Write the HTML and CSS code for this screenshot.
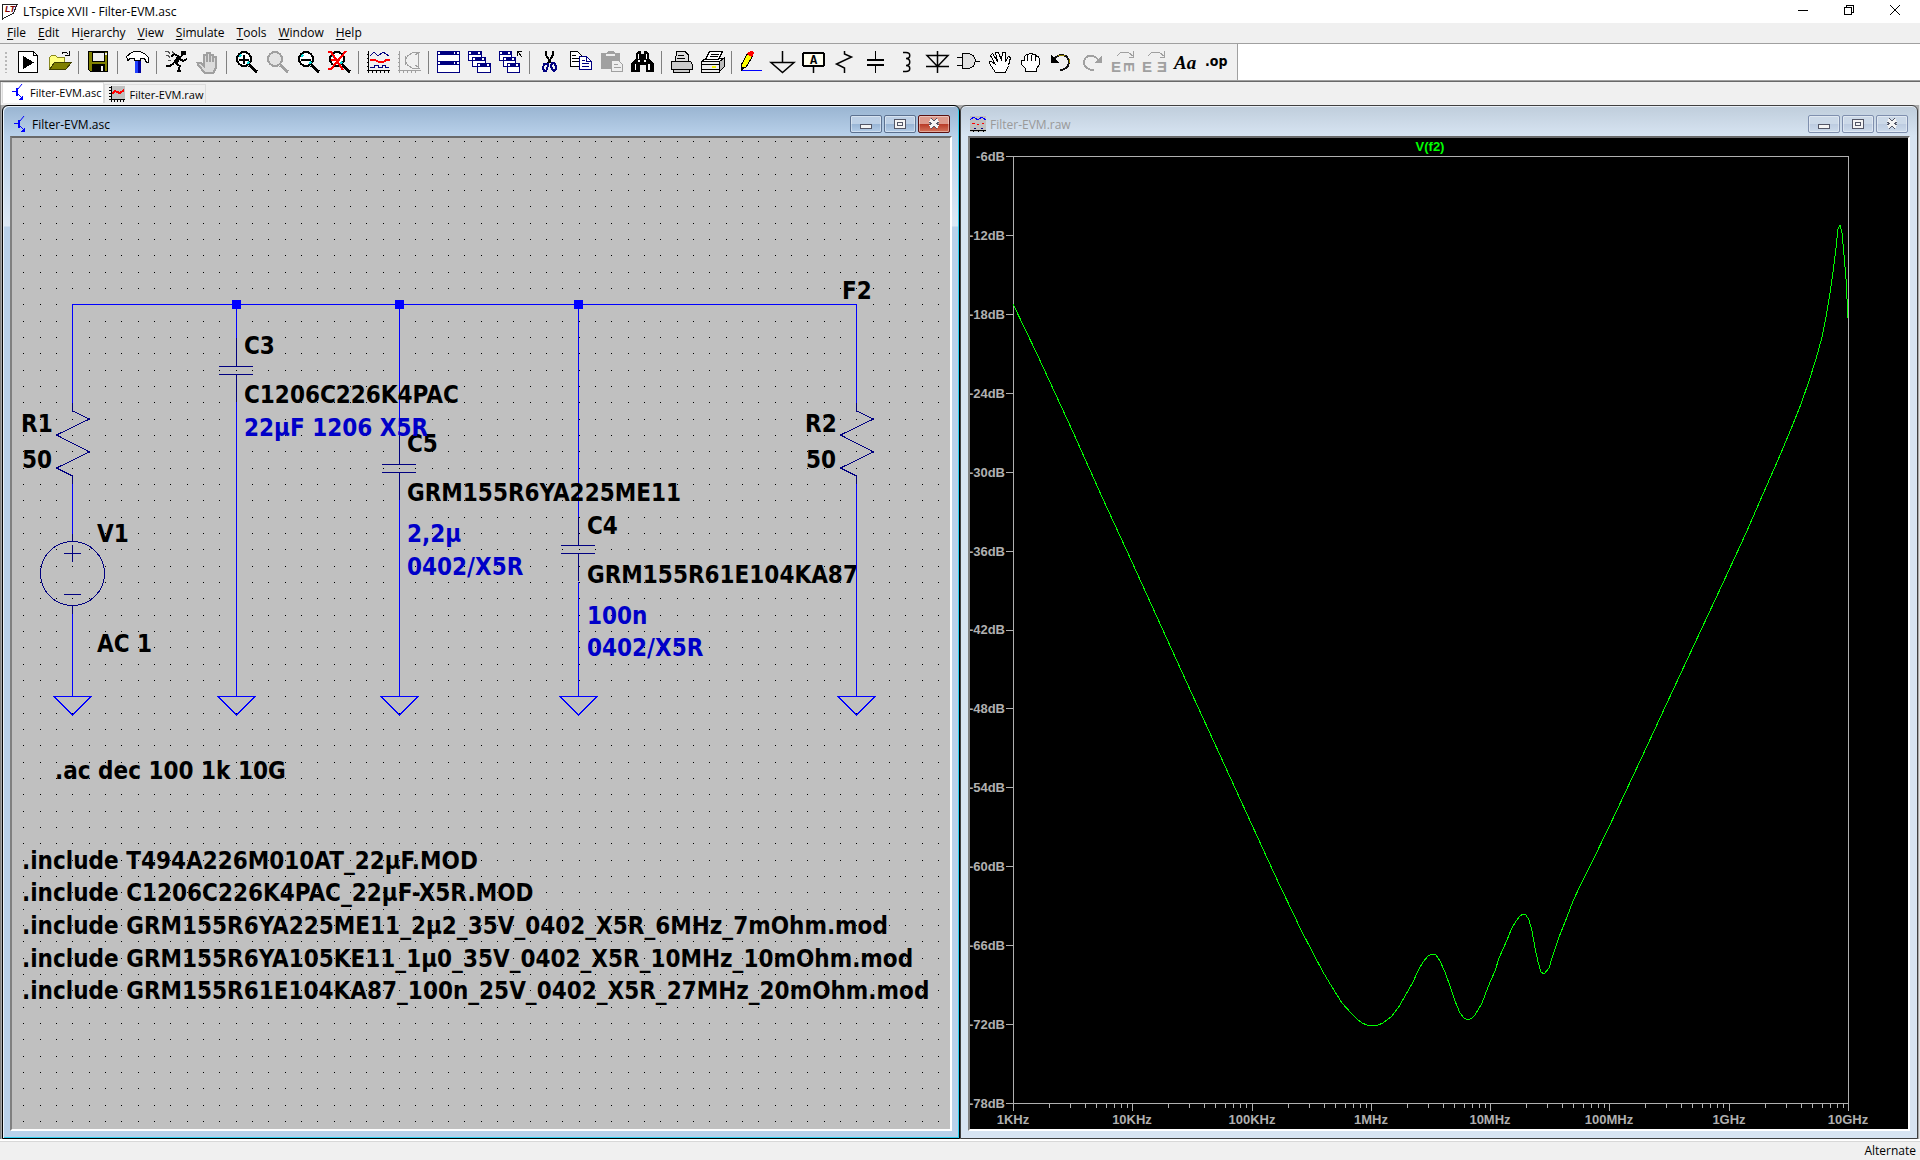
FILE: index.html
```html
<!DOCTYPE html>
<html lang="en">
  <head>
    <meta charset="UTF-8" />
    <title>LTspice XVII - Filter-EVM.asc</title>
    <link rel="stylesheet" href="styles.css">
  </head>
  <body>
    <header class="titlebar">
      <svg class="app-icon" width="17" height="17" viewBox="0 0 17 17">
        <path d="M.5 1v15l11-6 4-9z" fill="#fff" stroke="#222" />
        <text x="3" y="9" class="logo-text">LT</text>
      </svg>
      <h1>LTspice XVII - Filter-EVM.asc</h1>
      <div class="system-buttons">
        <button aria-label="Minimize"><svg width="12" height="12"><path d="M1 6.5h10" /></svg></button>
        <button aria-label="Restore"><svg width="12" height="12"><path d="M1.5 3.5h7v7h-7zM3.5 3.5v-2h7v7h-2" /></svg></button>
        <button aria-label="Close"><svg width="12" height="12"><path class="smooth" d="M1 1l10 10M11 1L1 11" /></svg></button>
      </div>
    </header>

    <nav class="menubar">
      <button><u>F</u>ile</button>
      <button><u>E</u>dit</button>
      <button>H<u>i</u>erarchy</button>
      <button><u>V</u>iew</button>
      <button><u>S</u>imulate</button>
      <button><u>T</u>ools</button>
      <button><u>W</u>indow</button>
      <button><u>H</u>elp</button>
    </nav>

    <div class="toolbar-row">
      <div class="toolbar">
        <span class="grip"></span>
        <button class="tool" aria-label="New schematic">
          <svg viewBox="0 0 23 23"><path d="M1.5 .5h15l4 4v17h-19z" fill="#fff" stroke="#000" /><path d="M16.5 .5v4h4" fill="none" stroke="#000" /><path d="M6 5v13l11-6.5z" /></svg>
        </button>
        <button class="tool" aria-label="Open">
          <svg viewBox="0 0 23 23"><path d="M1.5 18.5v-12l2-2h4l2 2h7v5" fill="#ffff80" stroke="#888820" /><path d="M1.5 18.5l5-7h17l-6 7z" fill="#808000" stroke="#404000" /><path d="M13.5 3.5c1-3 5-3 7 0M21.5 0v4h-5" fill="none" stroke="#000" /></svg>
        </button>
        <span class="separator"></span>
        <button class="tool" aria-label="Save">
          <svg viewBox="0 0 23 23"><path d="M1.5 .5h19v20h-17l-2-2z" fill="#808000" stroke="#000" /><path d="M5 1h12v9H5z" fill="#efefef" stroke="#000" /><path d="M5 13h13v8H5z" /><path d="M14 15h2v5h-2z" fill="#efefef" /><path d="M18 2h2v2h-2z" fill="#efefef" /></svg>
        </button>
        <span class="separator"></span>
        <button class="tool" aria-label="Control panel">
          <svg viewBox="0 0 23 23"><path d="M.5 5.5l5-4 3-1h6l5 3 3 3v5h-2l-2-4h-4v2H8v-2H4l-2 2z" fill="#fff" stroke="#000" /><path d="M9 10h6v12H9z" fill="#0000a0" /><path d="M9 10h3v12H9z" fill="#2040ff" /></svg>
        </button>
        <span class="separator"></span>
        <button class="tool" aria-label="Run">
          <svg viewBox="0 0 23 23"><path d="M16 0h5v4h-3l-2 2z" /><path d="M13 5l-4-2-3 3M15 8l3 2 4-2M10 12l5 3-2 5h3M9 12l-4 3H1" fill="none" stroke="#000" stroke-width="2" /><path d="M15 5l-5 7" stroke="#000" stroke-width="4" /><path d="M0 .5h3l2 2M1 4.5h2l2 2M7 .5l2 2M3 10l3-1" fill="none" stroke="#555" /></svg>
        </button>
        <button class="tool" aria-label="Halt" disabled>
          <svg viewBox="0 0 23 23"><path d="M8.5 21.5l-6-7-1-3h3l3 3v-11h3v-2h3v2h3v2h3v12l-2 4zM10.5 3v8M13.5 3v8M16.5 4v7" fill="#dcdcdc" stroke="#a0a0a0" stroke-width="2" /></svg>
        </button>
        <span class="separator"></span>
        <button class="tool" aria-label="Zoom in">
          <svg viewBox="0 0 23 23"><circle cx="9" cy="8" r="7" fill="#fff" stroke="#000" stroke-width="2" /><path d="M4 6l2-2M12 13l2-2" stroke="#00e0e0" stroke-width="2" /><path d="M9 4v9M4 8.5h10" stroke="#000" stroke-width="2" /><path d="M14 14l8 7" stroke="#000" stroke-width="3" /></svg>
        </button>
        <button class="tool" aria-label="Pan" disabled>
          <svg viewBox="0 0 23 23"><circle cx="9" cy="8" r="7" fill="#e4e4e4" stroke="#a0a0a0" stroke-width="2" /><path d="M14 14l8 7" stroke="#a0a0a0" stroke-width="3" /></svg>
        </button>
        <button class="tool" aria-label="Zoom out">
          <svg viewBox="0 0 23 23"><circle cx="9" cy="8" r="7" fill="#fff" stroke="#000" stroke-width="2" /><path d="M4 6l2-2M12 13l2-2" stroke="#00e0e0" stroke-width="2" /><path d="M4 8.5h10" stroke="#000" stroke-width="2" /><path d="M14 14l8 7" stroke="#000" stroke-width="3" /></svg>
        </button>
        <button class="tool" aria-label="Zoom full extents">
          <svg viewBox="0 0 23 23"><circle cx="9" cy="8" r="7" fill="#fff" stroke="#000" stroke-width="2" /><path d="M4 6l2-2M12 13l2-2" stroke="#00e0e0" stroke-width="2" /><path d="M14 14l8 7" stroke="#000" stroke-width="3" /><path d="M0 1h3l12 18M18 0L3 18H0M3 9h9" fill="none" stroke="#f00" stroke-width="2" /></svg>
        </button>
        <span class="separator"></span>
        <button class="tool" aria-label="Autorange">
          <svg viewBox="0 0 23 23"><path d="M1.5 0v22M0 19.5h23M0 3.5h2M0 7.5h2M0 11.5h2M0 15.5h2M5.5 19v3M9.5 19v3M13.5 19v3M17.5 19v3M21.5 19v3" stroke="#000" /><path d="M3 5l4-4 4 4 5-4 6 4M3 16.5h4v-2h4v2h4v-2h3v2h4" fill="none" stroke="#000080" /><path d="M3 9.5l4-1 4 2h6l3-2h3" fill="none" stroke="#f00" stroke-width="2" /></svg>
        </button>
        <button class="tool" aria-label="Bode plot" disabled>
          <svg viewBox="0 0 23 23"><path d="M1.5 0v22M0 19.5h23M0 3.5h2M0 7.5h2M0 11.5h2M0 15.5h2M5.5 19v3M9.5 19v3M13.5 19v3M17.5 19v3M20.5 1v16M7.5 5v9M7 9.5l3-5 5-3h7M7 9.5l3 5 5 3h7M17 4l3-2M17 14l3 2" fill="none" stroke="#a0a0a0" /></svg>
        </button>
        <span class="separator"></span>
        <button class="tool" aria-label="Tile windows">
          <svg viewBox="0 0 23 23"><path d="M.5 .5h22v10H.5zM.5 10.5h22v11H.5z" fill="#fff" stroke="#000080" /><path d="M0 0h23v4H0zM0 10h23v4H0z" fill="#000080" /><path d="M1 1h2v2H1zM17 1h1v2h-1zM20 1h2v2h-2zM1 11h2v2H1zM17 11h1v2h-1zM20 11h2v2h-2z" fill="#fff" /></svg>
        </button>
        <button class="tool" aria-label="Cascade windows">
          <svg viewBox="0 0 23 23"><g fill="#fff" stroke="#000080"><path d="M.5 .5h13v9H.5zM4.500 6.5h13v9h-13zM9.500 12.5h13v9h-13z" /></g><path d="M0 0h14v4H0zM4 6h14v4H4zM9 12h14v4H9z" fill="#000080" /><path d="M1 1h2v2H1zM10 1h2v2h-2zM5 7h2v2H5zM14 7h2v2h-2zM10 13h2v2h-2zM19 13h2v2h-2z" fill="#fff" /></svg>
        </button>
        <button class="tool" aria-label="Close all windows">
          <svg viewBox="0 0 23 23"><g fill="#fff" stroke="#000080"><path d="M.5 .5h12v9H.5zM4.5 6.5h12v9h-12zM8.5 12.5h12v9h-12z" /></g><path d="M0 0h13v4H0zM4 6h13v4H4zM8 12h13v4H8z" fill="#000080" /><path d="M1 1h2v2H1zM9 1h2v2H9zM5 7h2v2H5zM13 7h2v2h-2zM9 13h2v2H9zM17 13h2v2h-2z" fill="#fff" /><path d="M18.5 5V.5H23M19 1l4 5" fill="none" stroke="#000" /></svg>
        </button>
        <span class="separator"></span>
        <button class="tool" aria-label="Cut">
          <svg viewBox="0 0 23 23"><path d="M8 0v4l5 8M15 0v4l-5 8" fill="none" stroke="#000" stroke-width="2" /><path d="M6 13h4v2l-2 5H6l-1-3zM14 12h2l2 3v3l-2 2-2-2-1-3z" fill="none" stroke="#000080" stroke-width="2" /></svg>
        </button>
        <button class="tool" aria-label="Copy">
          <svg viewBox="0 0 23 23"><path d="M1.5 .5h7l4 4v11h-11z" fill="#fff" stroke="#000" /><path d="M3 4.5h4M3 7.5h7M3 10.5h7" stroke="#000" /><path d="M10.5 5.5h7l5 5v8h-12z" fill="#fff" stroke="#000080" /><path d="M17.5 5.5v5h5M13 9.5h3M13 12.5h7M13 15.5h7" fill="none" stroke="#000080" /></svg>
        </button>
        <button class="tool" aria-label="Paste" disabled>
          <svg viewBox="0 0 23 23"><path d="M1 2h5l2-2h5l2 2h5v16H1z" fill="#a0a0a0" /><path d="M6 3h9v2H6z" fill="#eee" /><path d="M11.5 9.5h7l4 4v7h-11z" fill="#eee" stroke="#a0a0a0" /><path d="M14 13.5h4M14 16.5h7" stroke="#a0a0a0" /></svg>
        </button>
        <button class="tool" aria-label="Find">
          <svg viewBox="0 0 23 23"><path d="M5 3l2-3h3v3h3V0h3l2 3v4l5 6v8h-8v-7H9v7H0v-8l5-6z" /><path d="M7 3h1v5H7zM15 3h1v5h-1zM4 13h1v6H4zM17 13h2v6h-2zM7 9h2v2H7zM13 9h2v2h-2z" fill="#fff" /></svg>
        </button>
        <span class="separator"></span>
        <button class="tool" aria-label="Print setup">
          <svg viewBox="0 0 23 23"><path d="M7 .5h8l3 3v7H5z" fill="#ddd" stroke="#000" /><path d="M1.5 10.5h19l2 3v5h-3v3h-16v-3h-2z" fill="#ccc" stroke="#000" /><path d="M4 18.5h15M8 4.5h6M7 7.5h8" stroke="#000" /></svg>
        </button>
        <button class="tool" aria-label="Print">
          <svg viewBox="0 0 23 23"><path d="M18 11l5-4v9l-5 5z" fill="#bbb" stroke="#000" /><path d="M.5 10.5l4-3h18l-4 3z" fill="#fff" stroke="#000" /><path d="M8.5 .5h13l-4 8h-13z" fill="#fff" stroke="#000" /><path d="M10 3.5h8M9 5.5h8" stroke="#000" /><path d="M.5 10.5h18v11H.5zM0 13.5h18M0 18.5h18" fill="#eee" stroke="#000" /><path d="M11 15h4v2h-4z" fill="#f5f500" /></svg>
        </button>
        <span class="separator"></span>
        <button class="tool" aria-label="Draw wire">
          <svg viewBox="0 0 23 23"><path d="M1.5 18.5v-5l6-11 5 3-6 10z" fill="#ff0" stroke="#000" /><path d="M8 1l4-1 2 2-2 4-5-3z" fill="#f00" /><path d="M1 15l4 2-4 3z" /><path d="M2 19.5h20" stroke="#00f" /></svg>
        </button>
        <button class="tool" aria-label="Ground">
          <svg viewBox="0 0 23 23"><path class="thick-line" d="M11.5 0v11M0 11.5h23l-11.500 10z" /></svg>
        </button>
        <button class="tool" aria-label="Label net">
          <svg viewBox="0 0 23 23"><rect x="1" y="2" width="21" height="13" rx="2" fill="#fffff0" stroke="#000" stroke-width="2" /><path class="thick-line" d="M11.5 16v6" /><text x="8" y="13" class="label-glyph">A</text></svg>
        </button>
        <button class="tool" aria-label="Resistor">
          <svg viewBox="0 0 23 23"><path class="thick-line" d="M11.5 0v3l7 3-15 7 8 4v5" /></svg>
        </button>
        <button class="tool" aria-label="Capacitor">
          <svg viewBox="0 0 23 23"><path d="M11.5 0v8M11.5 15v7" stroke="#000" /><path d="M3 9h17M3 14h17" stroke="#000" stroke-width="2" /></svg>
        </button>
        <button class="tool" aria-label="Inductor">
          <svg viewBox="0 0 23 23"><path class="thick-line" d="M8 1.5h3c5 0 5 6 0 6 5 0 5 7 0 7 5 0 5 6 0 6H8" /></svg>
        </button>
        <button class="tool" aria-label="Diode">
          <svg viewBox="0 0 23 23"><path class="thick-line" d="M11.5 0v22M1 4.5h21l-10.500 11zM0 15.500h23" /></svg>
        </button>
        <button class="tool" aria-label="Component">
          <svg viewBox="0 0 23 23"><path d="M5.5 2.5h6c9 2 9 13 0 15h-6z" fill="#e0e0e0" stroke="#000" /><path d="M0 6.5h5M0 14.5h5M18 10.5h5" stroke="#000" /></svg>
        </button>
        <button class="tool" aria-label="Move">
          <svg viewBox="0 0 23 23"><path d="M7.5 21.5l-6-9v-2h2l4 3-5-9 2-2 5 8-2-9h3l3 8 1-8h3v9l3-5 2 1-2 8-3 7z" fill="#fff" stroke="#000" /></svg>
        </button>
        <button class="tool" aria-label="Drag">
          <svg viewBox="0 0 23 23"><path d="M6.5 20.5v-3l-4-4v-4h3v-4l2-2h2l1-1h2l2 1h2l1 2h2l1 3v5l-3 4v3zM8.5 4v6M12.5 4v6M16.5 5v5" fill="#fff" stroke="#000" /></svg>
        </button>
        <button class="tool" aria-label="Undo">
          <svg viewBox="0 0 23 23"><path d="M3 10c4-8 15-8 16 1 0 5-4 8-9 8" fill="none" stroke="#111" stroke-width="2" /><path d="M8 4.500h7M19.500 8v4" stroke="#908000" /><path d="M1 4v8h8z" /></svg>
        </button>
        <button class="tool" aria-label="Redo" disabled>
          <svg viewBox="0 0 23 23"><path d="M18 10c-4-7-14-7-15 1 0 5 4 8 10 8" fill="none" stroke="#a0a0a0" stroke-width="2" /><path d="M21 4v8h-8z" fill="#a0a0a0" /></svg>
        </button>
        <button class="tool" aria-label="Rotate" disabled>
          <svg viewBox="0 0 23 23"><path d="M4.5 5.5l4-4h8l5 4M21.5 0v6h-5" fill="none" stroke="#a0a0a0" /><text x="-1" y="21" class="turn-glyph">E</text><text transform="translate(12 11) rotate(90)" class="turn-glyph">E</text></svg>
        </button>
        <button class="tool" aria-label="Mirror" disabled>
          <svg viewBox="0 0 23 23"><path d="M4.5 5.5l4-4h8l5 4M21.5 0v6h-5" fill="none" stroke="#a0a0a0" /><text x="-1" y="21" class="turn-glyph">E</text><text x="14" y="21" class="turn-glyph">Ǝ</text></svg>
        </button>
        <button class="tool" aria-label="Text">
          <svg viewBox="0 0 23 23"><text x="0" y="18" class="aa-glyph">Aa</text></svg>
        </button>
        <button class="tool" aria-label="SPICE directive">
          <svg viewBox="0 0 23 23"><text x="0" y="15" class="op-glyph">.op</text></svg>
        </button>
      </div>
    </div>

    <div class="tabs" role="tablist">
      <button class="tab tab-active" role="tab" aria-selected="true">
        <svg width="16" height="16"><use href="#transistor" /></svg>
        Filter-EVM.asc
      </button>
      <button class="tab" role="tab" aria-selected="false">
        <svg width="16" height="16"><path d="M2 0h14v14H2z" fill="#c0c0c0" /><path d="M2.5 0v16M0 13.5h16M0 1.5h2M0 4.5h2M0 7.5h2M0 10.5h2M5.5 14v2M8.5 14v2M11.5 14v2M14.5 14v2" stroke="#000" /><path d="M3 8l3-3 2 1 3 1 4-3" fill="none" stroke="#f00" stroke-width="2" /></svg>
        Filter-EVM.raw
      </button>
    </div>

    <main class="workspace">
      <section class="window window-active">
        <div class="window-title">
          <svg width="16" height="16">
            <g id="transistor" stroke="#00f"><path d="M2 7.5h4" /><path d="M7 4v8" stroke-width="2" /><path class="smooth" d="M8 5l4-5M8 10l4 4" /><path d="M13 15.500H9l4-4z" fill="#00f" stroke="none" /></g>
          </svg>
          <h2>Filter-EVM.asc</h2>
          <button aria-label="Minimize"><svg width="12" height="12"><rect x=".5" y="6.5" width="11" height="4" /></svg></button>
          <button aria-label="Maximize"><svg width="12" height="12"><path d="M.5 1.5h11v9H.5zM3.5 4.5h5v3h-5z" /></svg></button>
          <button class="close" aria-label="Close"><svg width="12" height="12"><path class="cross-edge" d="M2 2l8 7M10 2L2 9" /><path class="cross" d="M2 2l8 7M10 2L2 9" /></svg></button>
        </div>
        <div class="view schematic">
          <svg viewBox="12 138 938 991" role="img" aria-label="Filter schematic">
            <defs>
              <pattern id="grid" x="23" y="157" width="49" height="49" patternUnits="userSpaceOnUse">
                <path d="M0 0h1v1H0zM17 0h1v1h-1zM33 0h1v1h-1zM0 17h1v1H0zM17 17h1v1h-1zM33 17h1v1h-1zM0 33h1v1H0zM17 33h1v1h-1zM33 33h1v1h-1z" />
              </pattern>
              <path id="ground" d="M-18 .5h37L.5 19z" />
              <path id="resistor" d="M.5 0v8l17 8-33 16 33 17-33 16 16 8v8" />
              <g id="capacitor"><path d="M.5-28V0M.5 8v28" /><path d="M-17 .5h34M-17 8.5h34" /></g>
            </defs>
            <rect x="12" y="138" width="938" height="991" fill="url(#grid)" />

            <g class="wire">
              <path d="M72.5 403V304.5h784V403M72.5 484v50M72.5 614v82M856.5 484v212" />
              <path d="M236.5 304v34M236.5 402v294M399.5 304v132M399.5 500v196M578.5 304v214M578.5 582v114" />
              <use href="#ground" x="72" y="696" />
              <use href="#ground" x="236" y="696" />
              <use href="#ground" x="399" y="696" />
              <use href="#ground" x="578" y="696" />
              <use href="#ground" x="856" y="696" />
            </g>
            <path class="junction" d="M232 300h9v9h-9zM395 300h9v9h-9zM574 300h9v9h-9z" />

            <g class="symbol">
              <use href="#resistor" x="72" y="403" />
              <use href="#resistor" x="856" y="403" />
              <use href="#capacitor" x="236" y="366" />
              <use href="#capacitor" x="399" y="464" />
              <use href="#capacitor" x="578" y="545" />
              <circle cx="72.5" cy="573.5" r="32" />
              <path d="M72.5 534v8M72.5 606v8M64 553.5h17M72.5 545v17M64 594.5h17" />
            </g>

            <g class="label">
              <text x="842" y="299">F2</text>
              <text x="21" y="432">R1</text>
              <text x="22" y="468">50</text>
              <text x="805" y="432">R2</text>
              <text x="806" y="468">50</text>
              <text x="97" y="542">V1</text>
              <text x="97" y="652">AC 1</text>
              <text x="244" y="354">C3</text>
              <text x="244" y="403">C1206C226K4PAC</text>
              <text x="407" y="452">C5</text>
              <text x="407" y="501">GRM155R6YA225ME11</text>
              <text x="587" y="534">C4</text>
              <text x="587" y="583">GRM155R61E104KA87</text>
              <text x="55" y="779">.ac dec 100 1k 10G</text>
              <text x="22" y="869">.include T494A226M010AT_22µF.MOD</text>
              <text x="22" y="901">.include C1206C226K4PAC_22µF-X5R.MOD</text>
              <text x="22" y="934">.include GRM155R6YA225ME11_2µ2_35V_0402_X5R_6MHz_7mOhm.mod</text>
              <text x="22" y="967">.include GRM155R6YA105KE11_1µ0_35V_0402_X5R_10MHz_10mOhm.mod</text>
              <text x="22" y="999">.include GRM155R61E104KA87_100n_25V_0402_X5R_27MHz_20mOhm.mod</text>
            </g>
            <g class="label note">
              <text x="244" y="436">22µF 1206 X5R</text>
              <text x="407" y="542">2,2µ</text>
              <text x="407" y="575">0402/X5R</text>
              <text x="587" y="624">100n</text>
              <text x="587" y="656">0402/X5R</text>
            </g>
          </svg>
        </div>
      </section>

      <section class="window">
        <div class="window-title">
          <svg width="16" height="16">
            <path d="M0 0h16v16H0z" fill="#c0c0c0" /><path d="M0 4l4-3 4 3 4-3 4 3" fill="none" stroke="#00f" /><path d="M2 7.5h3M7 8.5h2M12 7.5h2" stroke="#f00" /><path d="M4 12.5h2M11 12.5h2" stroke="#000080" /><path d="M0 14.5h16M3.5 14v2M8.5 14v2M13.5 14v2" stroke="#000" />
          </svg>
          <h2>Filter-EVM.raw</h2>
          <button aria-label="Minimize"><svg width="12" height="12"><rect x=".5" y="6.5" width="11" height="4" /></svg></button>
          <button aria-label="Maximize"><svg width="12" height="12"><path d="M.5 1.5h11v9H.5zM3.5 4.5h5v3h-5z" /></svg></button>
          <button aria-label="Close"><svg width="12" height="12"><path class="cross-edge" d="M2 2l8 7M10 2L2 9" /><path class="cross" d="M2 2l8 7M10 2L2 9" /></svg></button>
        </div>
        <div class="view plot">
          <svg viewBox="970 138 938 991" role="img" aria-label="V(f2) frequency response">
            <defs>
              <path id="decade" d="M.5 0v7M36.5 0v4M57.5 0v4M72.5 0v4M83.5 0v4M93.5 0v4M101.5 0v4M108.5 0v4M114.5 0v4" />
            </defs>
            <g class="axis">
              <path d="M1013.5 156.5h835v947h-835z" />
              <path d="M1006 156.5h7M1006 235.5h7M1006 314.5h7M1006 393.5h7M1006 472.5h7M1006 551.5h7M1006 630.5h7M1006 708.5h7M1006 787.5h7M1006 866.5h7M1006 945.5h7M1006 1024.5h7M1006 1103.5h7" />
              <use href="#decade" x="1013" y="1104" />
              <use href="#decade" x="1132" y="1104" />
              <use href="#decade" x="1252" y="1104" />
              <use href="#decade" x="1371" y="1104" />
              <use href="#decade" x="1490" y="1104" />
              <use href="#decade" x="1609" y="1104" />
              <use href="#decade" x="1729" y="1104" />
              <path d="M1848.5 1104v7" />
            </g>
            <g class="tick tick-y">
              <text x="1005" y="161">-6dB</text>
              <text x="1005" y="240">-12dB</text>
              <text x="1005" y="319">-18dB</text>
              <text x="1005" y="398">-24dB</text>
              <text x="1005" y="477">-30dB</text>
              <text x="1005" y="556">-36dB</text>
              <text x="1005" y="634">-42dB</text>
              <text x="1005" y="713">-48dB</text>
              <text x="1005" y="792">-54dB</text>
              <text x="1005" y="871">-60dB</text>
              <text x="1005" y="950">-66dB</text>
              <text x="1005" y="1029">-72dB</text>
              <text x="1005" y="1108">-78dB</text>
            </g>
            <g class="tick">
              <text x="1013" y="1124">1KHz</text>
              <text x="1132" y="1124">10KHz</text>
              <text x="1252" y="1124">100KHz</text>
              <text x="1371" y="1124">1MHz</text>
              <text x="1490" y="1124">10MHz</text>
              <text x="1609" y="1124">100MHz</text>
              <text x="1729" y="1124">1GHz</text>
              <text x="1848" y="1124">10GHz</text>
              <text class="trace-name" x="1430" y="151">V(f2)</text>
            </g>
            <polyline class="trace" points="1013,304 1025,329 1037,354 1049,380 1073,432 1102,497 1132,562 1192,694 1252,825 1268,860 1280,886 1294,915 1300,928 1313,953 1323,972 1332,987 1342,1003 1352,1014 1357,1019 1362,1023 1367,1025 1372,1026 1378,1025 1383,1023 1392,1016 1400,1005 1405,996 1413,982 1418,971 1423,962 1428,956 1432,954 1436,955 1440,961 1445,972 1450,986 1455,1001 1460,1013 1464,1018 1468,1020 1472,1018 1475,1015 1482,1003 1488,987 1495,971 1499,958 1507,940 1511,930 1516,921 1520,916 1523,914 1526,915 1529,920 1532,931 1535,948 1538,962 1541,972 1544,974 1549,968 1553,955 1559,937 1567,917 1573,901 1580,886 1593,860 1609,827 1641,759 1673,690 1701,630 1729,570 1746,533 1763,494 1778,460 1791,429 1801,404 1809,381 1816,359 1822,337 1826,317 1830,293 1833,272 1836,248 1838,229 1840,225 1842,233 1844,255 1846,279 1848,318" />
          </svg>
        </div>
      </section>
    </main>

    <footer class="statusbar">Alternate</footer>
  </body>
</html>
```
FILE: styles.css
```css
* {
  box-sizing: border-box;
}

body {
  margin: 0;
  height: 100vh;
  display: flex;
  flex-direction: column;
  overflow: hidden;
  background: #f0f0f0;
  color: #000;
  font-family: "Open Sans", "Noto Sans", sans-serif;
  font-size: 12px;
}

h1,
h2 {
  margin: 0;
  font-size: 12px;
  font-weight: 400;
}

button {
  margin: 0;
  padding: 0;
  border: none;
  background: none;
  color: inherit;
  font: inherit;
}

svg {
  display: block;
  shape-rendering: crispEdges;
}

.smooth {
  shape-rendering: auto;
}

/* Application title */
.titlebar {
  display: flex;
  align-items: center;
  height: 23px;
  padding: 0 2px;
  background: #fff;
}

.titlebar h1 {
  flex: 1;
  margin-left: 4px;
}

.logo-text {
  font: italic bold 9px "Liberation Sans", sans-serif;
  fill: #800000;
}

.system-buttons {
  display: flex;
  align-self: flex-start;
}

.system-buttons button {
  display: grid;
  place-items: center;
  width: 46px;
  height: 20px;
}

.system-buttons svg {
  fill: none;
  stroke: #000;
}

/* Menu */
.menubar {
  display: flex;
  gap: 12px;
  height: 21px;
  padding: 0 7px 1px;
  border-bottom: 1px solid #a0a0a0;
}

.menubar u {
  text-underline-offset: 2px;
}

/* Toolbar */
.toolbar-row {
  background: #fff;
  border-bottom: 1px solid #696969;
  box-shadow: inset 0 -1px #a0a0a0;
}

.toolbar {
  display: flex;
  width: max-content;
  height: 37px;
  padding: 7px 5px 7px 4px;
  background: #f0f0f0;
  border-right: 1px solid #a0a0a0;
  border-bottom: 1px solid #a0a0a0;
}

.grip {
  width: 9px;
  background: radial-gradient(#b8b8b8 1px, transparent 1px) 0 0 / 4px 4px repeat-y;
}

.tool {
  width: 31px;
  height: 23px;
  padding: 0 4px;
}

.tool svg {
  width: 23px;
  height: 23px;
  overflow: visible;
}

.thick-line {
  fill: none;
  stroke: #000;
  stroke-width: 1.5;
  shape-rendering: auto;
}

.separator {
  width: 8px;
  margin-bottom: -1px;
  background: linear-gradient(#808080, #808080) 3px 0 / 1px 100% no-repeat;
}

.label-glyph {
  font: bold 12px "Liberation Mono", monospace;
}

.turn-glyph {
  font: bold 15px "Liberation Sans", sans-serif;
  fill: #a0a0a0;
}

.aa-glyph {
  font: italic bold 19px "Liberation Serif", serif;
}

.op-glyph {
  font: bold 14px "DejaVu Sans Condensed", sans-serif;
}

/* Document tabs */
.tabs {
  display: flex;
  align-items: flex-end;
  height: 23px;
  padding: 0 1px 2px;
  border-left: 1px solid #a0a0a0;
  font-size: 11px;
}

.tab {
  display: flex;
  align-items: center;
  gap: 4px;
  height: 19px;
  padding: 0 2px 0 4px;
  border: 1px solid #dcdcdc;
  border-bottom: none;
}

.tab-active {
  height: 21px;
  padding: 0 2px 2px 7px;
  background: #fff;
}

/* Tiled document windows */
.workspace {
  flex: 1;
  display: flex;
  min-height: 0;
  padding: 0 1px;
  border-left: 1px solid #808080;
  border-right: 1px solid #e3e3e3;
  background: #ababab;
}

.window {
  flex: 1;
  display: flex;
  flex-direction: column;
  min-width: 0;
  padding: 0 7px 7px;
  border: 1px solid #404040;
  border-radius: 6px 6px 0 0;
  background: linear-gradient(#bfcddb, #d7e4f2 30px);
  box-shadow: inset 0 1px #e8eef5;
  color: #999;
}

.window-active {
  border-color: #000;
  background: linear-gradient(#99b4d1, #b9d1ea 30px, #dce8f4 120px, #b9d1ea 121px);
  box-shadow: inset 1px 1px #e8f2fb, inset -1px -1px #2fd0f0;
  color: #000;
}

.window-title {
  display: flex;
  align-items: center;
  gap: 2px;
  height: 30px;
  padding: 6px 2px 0;
}

.window-title h2 {
  flex: 1;
  margin-left: 2px;
}

.window-title button {
  display: grid;
  place-items: center;
  width: 32px;
  height: 18px;
  border: 1px solid #7f8fae;
  border-radius: 2px;
  background: linear-gradient(#ccd9e8 50%, #bccbe0 50%, #cddbeb);
  box-shadow: inset 0 0 0 1px rgba(255, 255, 255, 0.4);
}

.window-active .window-title button {
  border-color: #5c7190;
  background: linear-gradient(#bdd0e6 50%, #98b4d4 50%, #b4cde8);
}

.window-active .window-title .close {
  border-color: #5a1010;
  background: linear-gradient(#dd9a8c 50%, #b83a26 50%, #d3735a);
}

.window-title button svg {
  fill: #f4f4f4;
  stroke: #535666;
}

.window-title .cross-edge {
  stroke-width: 5;
}

.window-title .cross {
  stroke: #f4f4f4;
  stroke-width: 3;
}

.view {
  flex: 1;
  min-height: 0;
  border: 2px solid;
  border-color: #696969 #fff #fff #808080;
}

.view svg {
  width: 100%;
  height: 100%;
}

/* Schematic */
.schematic {
  background: #c0c0c0;
}

.wire {
  fill: none;
  stroke: #00f;
}

.symbol {
  fill: none;
  stroke: #000080;
}

.junction {
  fill: #00f;
}

.label {
  font: bold 24px "DejaVu Sans Condensed", "DejaVu Sans", sans-serif;
}

.note {
  fill: #0000c8;
}

/* Waveform plot */
.plot {
  background: #000;
}

.axis {
  fill: none;
  stroke: #b0b0b0;
}

.tick {
  font: bold 13px "Liberation Sans", Arial, sans-serif;
  fill: #b0b0b0;
  text-anchor: middle;
}

.tick-y {
  text-anchor: end;
}

.trace-name {
  fill: #0f0;
}

.trace {
  fill: none;
  stroke: #0f0;
}

.statusbar {
  height: 21px;
  padding: 0 4px;
  border-top: 1px solid #fff;
  box-shadow: inset 0 1px #fff, inset 0 2px #d8d8d8;
  line-height: 22px;
  text-align: right;
}
```
